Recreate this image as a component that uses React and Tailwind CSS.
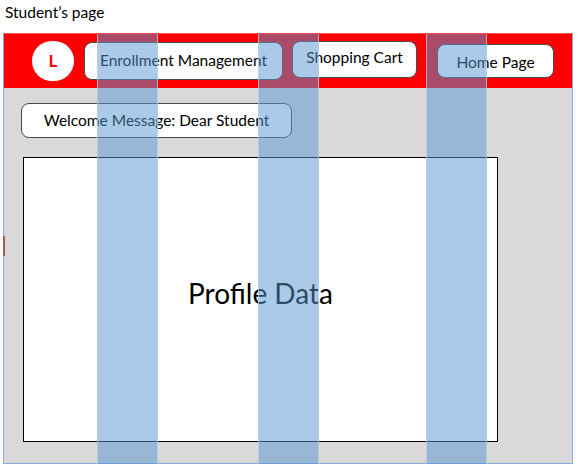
import React from 'react';

const font = { fontFamily: 'Lato, "Open Sans", sans-serif' };

const NavButton = ({ children, className = '' }) => (
  <div
    className={`flex items-center justify-center rounded-[8px] border-[1.5px] border-[#4a4a4a] bg-white text-[15.5px] text-black ${className}`}
  >
    {children}
  </div>
);

const App = () => {
  const columns = [93, 254, 422];

  return (
    <div className="h-[469px] w-[580px] bg-white" style={font}>
      <div className="pl-[5px] pt-[2px] text-[15.5px] leading-[20px] text-black">Student’s page</div>

      <div className="relative ml-[3px] mt-[11px] w-[570px] border border-[#8eaadb] border-t-[#ff5050]">
        {/* header */}
        <div className="flex h-[54px] items-center bg-[#ff0000] pl-[28px]">
          <div className="flex h-[40px] w-[42px] items-center justify-center rounded-full bg-white text-[17px] font-bold text-[#ff0000]">
            L
          </div>
          <NavButton className="ml-[10px] h-[38px] w-[199px]">Enrollment Management</NavButton>
          <NavButton className="ml-[9px] -mt-[3px] h-[37px] w-[125px] pb-[3px]">Shopping Cart</NavButton>
          <NavButton className="ml-[20px] h-[34px] w-[117px] pt-[3px]">Home Page</NavButton>
        </div>

        {/* body */}
        <div className="flex flex-col bg-[#d9d9d9] pb-[21px] pl-[17px] pt-[15px]">
          <NavButton className="h-[35px] w-[271px]">Welcome Message: Dear Student</NavButton>
          <div className="ml-[2px] mt-[19px] flex h-[285px] w-[475px] items-center justify-center border-[1.5px] border-black bg-white pb-[14px] text-[28px] text-black">
            Profile Data
          </div>
        </div>

        {/* stray mark on left edge */}
        <div className="absolute left-[-1px] top-[202px] h-[20px] w-[2px] bg-[#a0623a]" />

        {/* translucent column overlays */}
        {columns.map((left) => (
          <div
            key={left}
            className="pointer-events-none absolute -bottom-px top-0 w-[61px] border-x border-[#bcd5ee]/70 bg-[rgba(85,150,210,0.5)]"
            style={{ left }}
          />
        ))}
      </div>
    </div>
  );
};

export default App;
